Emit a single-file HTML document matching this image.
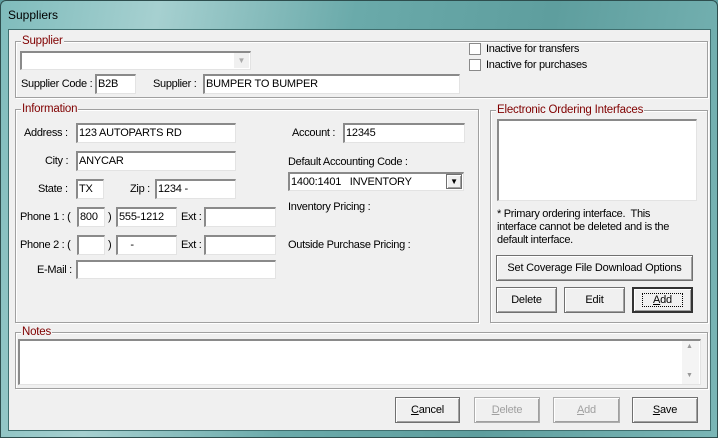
<!DOCTYPE html>
<html><head><meta charset="utf-8"><style>
*{box-sizing:border-box;margin:0;padding:0}
body{width:718px;height:438px;overflow:hidden;background:#5e9ea0;font-family:"Liberation Sans",Arial,sans-serif;font-size:11px;color:#000;position:relative}
#frame{position:absolute;left:0;top:0;width:718px;height:438px;background:linear-gradient(100deg,#7fbcbc 0%,#a6d0d0 20%,#6aaaaa 45%,#5e9e9e 70%,#7ab6b6 100%);border:1px solid #2e4e4e;border-radius:6px 6px 0 0}
#title{position:absolute;left:8px;top:8px;font-size:12px;color:#000}
#client{position:absolute;left:8px;top:29px;width:703px;height:402px;background:#f0f0f0;border:1px solid #3f6f6f}
.a{position:absolute;white-space:nowrap}
.g{position:absolute;border:1px solid #a0a0a0;box-shadow:inset 1px 1px 0 #fff,1px 1px 0 #fff}
.gl{position:absolute;background:#f0f0f0;color:#800000;padding:0 1px;font-size:11.5px;line-height:12px;letter-spacing:-0.2px}
.i{position:absolute;background:#fff;border-top:2px solid #8a8a8a;border-left:2px solid #8a8a8a;border-right:1px solid #e3e3e3;border-bottom:1px solid #e3e3e3;padding:1px 1px;font-size:11px;letter-spacing:-0.2px;line-height:14px;white-space:nowrap;overflow:hidden}
.b{position:absolute;background:#f0f0f0;border:1px solid #707070;box-shadow:inset 1px 1px 0 #fff,inset -1px -1px 0 #a0a0a0;text-align:center;font-size:11px;letter-spacing:-0.2px;white-space:nowrap}
.dis{color:#a0a0a0}
.cb{position:absolute;width:12px;height:12px;border:1px solid #8a8a8a;background:#fff}
.l{font-size:11px;letter-spacing:-0.3px}
</style></head><body>
<div id="frame"></div>
<div id="title">Suppliers</div>
<div id="client"></div>

<div class="g" style="left:15px;top:41px;width:693px;height:57px"></div>
<div class="gl" style="left:21px;top:35px">Supplier</div>
<div class="i" style="left:20px;top:51px;width:231px;height:19px"></div>
<div class="a" style="left:234px;top:53px;width:15px;height:15px;background:#f0f0f0;text-align:center;color:#aaa;font-size:8px;line-height:15px">▼</div>
<div class="cb" style="left:469px;top:43px"></div>
<div class="a l" style="left:486px;top:43px">Inactive for transfers</div>
<div class="cb" style="left:469px;top:59px"></div>
<div class="a l" style="left:486px;top:59px">Inactive for purchases</div>
<div class="a l" style="left:21px;top:78px">Supplier Code :</div>
<div class="i" style="left:95px;top:74px;width:41px;height:20px">B2B</div>
<div class="a l" style="left:153px;top:78px">Supplier :</div>
<div class="i" style="left:203px;top:74px;width:257px;height:20px">BUMPER TO BUMPER</div>

<div class="g" style="left:15px;top:109px;width:464px;height:214px"></div>
<div class="gl" style="left:21px;top:103px">Information</div>
<div class="a l" style="left:24px;top:127px">Address :</div>
<div class="i" style="left:76px;top:123px;width:160px;height:20px">123 AUTOPARTS RD</div>
<div class="a l" style="left:45px;top:155px">City :</div>
<div class="i" style="left:76px;top:151px;width:160px;height:20px">ANYCAR</div>
<div class="a l" style="left:38px;top:183px">State :</div>
<div class="i" style="left:76px;top:179px;width:28px;height:20px">TX</div>
<div class="a l" style="left:130px;top:183px">Zip :</div>
<div class="i" style="left:155px;top:179px;width:81px;height:20px">1234 -</div>
<div class="a l" style="left:20px;top:211px">Phone 1 : (</div>
<div class="i" style="left:77px;top:207px;width:28px;height:20px">800</div>
<div class="a l" style="left:108px;top:211px">)</div>
<div class="i" style="left:116px;top:207px;width:61px;height:20px">555-1212</div>
<div class="a l" style="left:181px;top:211px">Ext :</div>
<div class="i" style="left:204px;top:207px;width:72px;height:20px"></div>
<div class="a l" style="left:20px;top:239px">Phone 2 : (</div>
<div class="i" style="left:77px;top:235px;width:28px;height:20px"></div>
<div class="a l" style="left:108px;top:239px">)</div>
<div class="i" style="left:116px;top:235px;width:61px;height:20px">&nbsp;&nbsp;&nbsp;&nbsp;-</div>
<div class="a l" style="left:181px;top:239px">Ext :</div>
<div class="i" style="left:204px;top:235px;width:72px;height:20px"></div>
<div class="a l" style="left:37px;top:264px">E-Mail :</div>
<div class="i" style="left:76px;top:260px;width:200px;height:19px"></div>
<div class="a l" style="left:292px;top:127px">Account :</div>
<div class="i" style="left:343px;top:123px;width:122px;height:20px">12345</div>
<div class="a l" style="left:288px;top:156px">Default Accounting Code :</div>
<div class="i" style="left:288px;top:172px;width:176px;height:19px">1400:1401&nbsp;&nbsp;&nbsp;INVENTORY</div>
<div class="b" style="left:446px;top:174px;width:16px;height:15px;font-size:8px;line-height:13px">▼</div>
<div class="a l" style="left:288px;top:201px">Inventory Pricing :</div>
<div class="a l" style="left:288px;top:239px">Outside Purchase Pricing :</div>

<div class="g" style="left:490px;top:110px;width:218px;height:213px"></div>
<div class="gl" style="left:496px;top:104px">Electronic Ordering Interfaces</div>
<div class="i" style="left:497px;top:119px;width:200px;height:82px"></div>
<div class="a l" style="left:497px;top:208px;line-height:13px">* Primary ordering interface.&nbsp; This<br>interface cannot be deleted and is the<br>default interface.</div>
<div class="b" style="left:496px;top:255px;width:197px;height:26px;line-height:24px">Set Coverage File Download Options</div>
<div class="b" style="left:496px;top:287px;width:61px;height:26px;line-height:24px">Delete</div>
<div class="b" style="left:564px;top:287px;width:61px;height:26px;line-height:24px">Edit</div>
<div class="b" style="left:632px;top:287px;width:61px;height:26px;line-height:22px;border:2px solid #333"><span style="border:1px dotted #000;padding:0 10px"><u>A</u>dd</span></div>

<div class="g" style="left:15px;top:332px;width:693px;height:57px"></div>
<div class="gl" style="left:21px;top:326px">Notes</div>
<div class="i" style="left:18px;top:339px;width:683px;height:46px"></div>
<div class="a" style="left:682px;top:341px;width:17px;height:43px;background:#f4f4f4"></div>
<div class="a" style="left:686px;top:343px;color:#999;font-size:7px">▲</div>
<div class="a" style="left:686px;top:372px;color:#999;font-size:7px">▼</div>

<div class="b" style="left:395px;top:397px;width:65px;height:26px;line-height:24px"><u>C</u>ancel</div>
<div class="b dis" style="left:474px;top:397px;width:66px;height:26px;line-height:24px;border-color:#adadad"><u>D</u>elete</div>
<div class="b dis" style="left:553px;top:397px;width:67px;height:26px;line-height:24px;border-color:#adadad"><u>A</u>dd</div>
<div class="b" style="left:632px;top:397px;width:66px;height:26px;line-height:24px"><u>S</u>ave</div>
</body></html>
